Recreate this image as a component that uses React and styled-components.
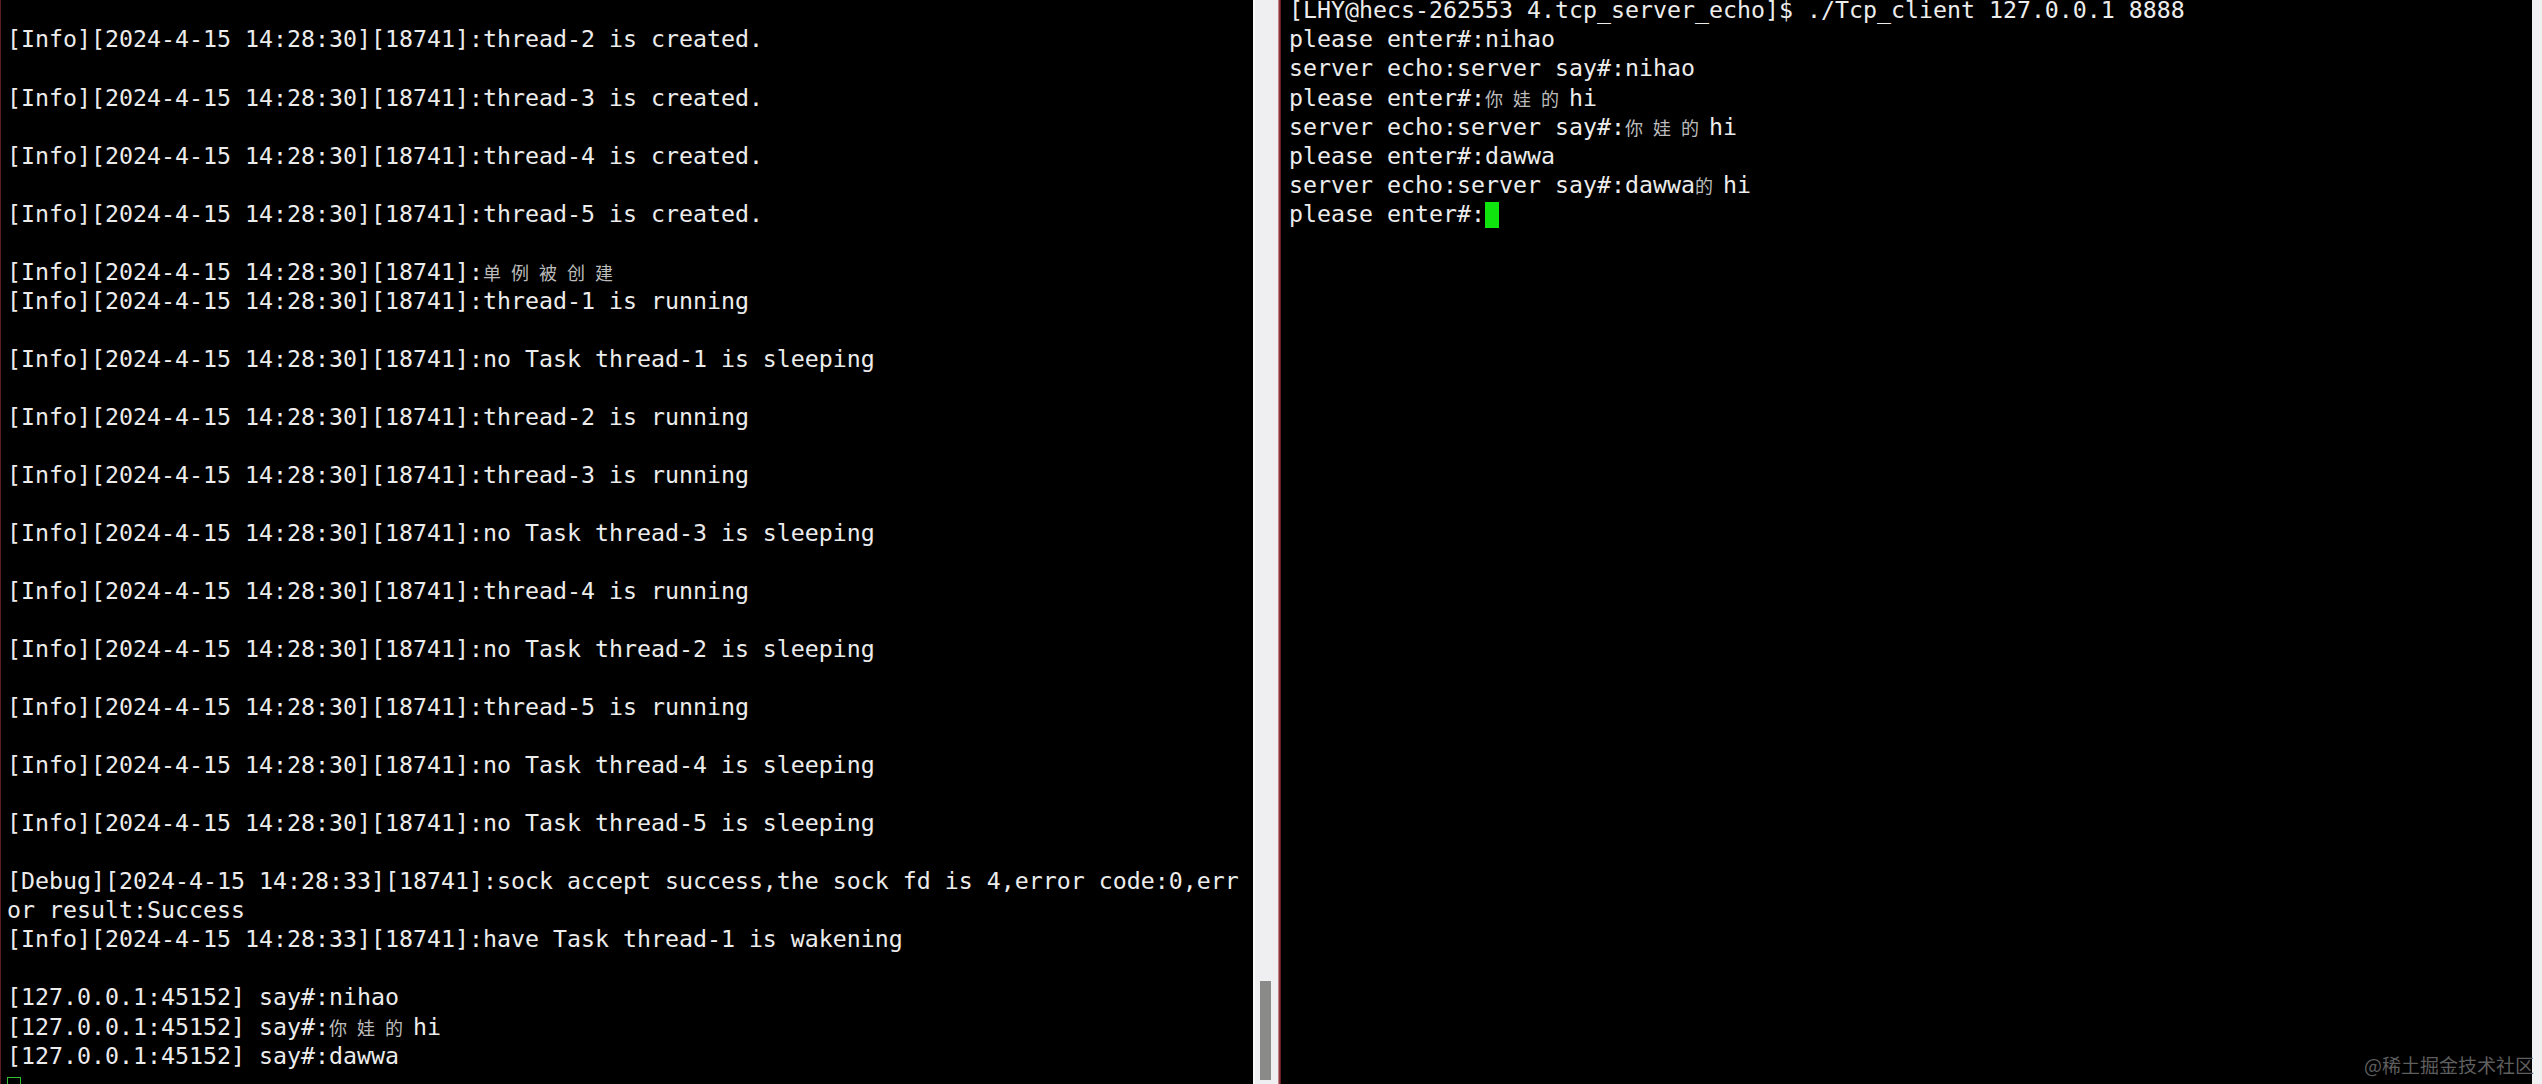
import React from 'react'
import styled, { createGlobalStyle, css } from 'styled-components'

//x//////////////////////////////////////////////////
// Data
//x//////////////////////////////////////////////////

const info = (t, msg) => `[Info][2024-4-15 14:28:${t}][18741]:${msg}`

const serverLines = [
  '',
  info(30, 'thread-2 is created.'),
  '',
  info(30, 'thread-3 is created.'),
  '',
  info(30, 'thread-4 is created.'),
  '',
  info(30, 'thread-5 is created.'),
  '',
  info(30, '单例被创建'),
  info(30, 'thread-1 is running'),
  '',
  info(30, 'no Task thread-1 is sleeping'),
  '',
  info(30, 'thread-2 is running'),
  '',
  info(30, 'thread-3 is running'),
  '',
  info(30, 'no Task thread-3 is sleeping'),
  '',
  info(30, 'thread-4 is running'),
  '',
  info(30, 'no Task thread-2 is sleeping'),
  '',
  info(30, 'thread-5 is running'),
  '',
  info(30, 'no Task thread-4 is sleeping'),
  '',
  info(30, 'no Task thread-5 is sleeping'),
  '',
  '[Debug][2024-4-15 14:28:33][18741]:sock accept success,the sock fd is 4,error code:0,err',
  'or result:Success',
  info(33, 'have Task thread-1 is wakening'),
  '',
  '[127.0.0.1:45152] say#:nihao',
  '[127.0.0.1:45152] say#:你娃的hi',
  '[127.0.0.1:45152] say#:dawwa',
]

const clientLines = [
  '[LHY@hecs-262553 4.tcp_server_echo]$ ./Tcp_client 127.0.0.1 8888',
  'please enter#:nihao',
  'server echo:server say#:nihao',
  'please enter#:你娃的hi',
  'server echo:server say#:你娃的hi',
  'please enter#:dawwa',
  'server echo:server say#:dawwa的hi',
]

const HAN = /[\u4e00-\u9fff]/

// split a line so each CJK glyph takes a double-width cell
const renderText = (text) => {
  const out = []
  let buf = ''
  ;[...text].forEach((ch, i) => {
    if (HAN.test(ch)) {
      if (buf) out.push(buf)
      buf = ''
      out.push(<SWide key={i}>{ch}</SWide>)
    } else {
      buf += ch
    }
  })
  if (buf) out.push(buf)
  return out
}

//x//////////////////////////////////////////////////
// App
//x//////////////////////////////////////////////////

export default function App() {
  return (
    <>
      <GlobalStyle />
      <SDesktop>
        <SPane $edge>
          <SScreen>
            {serverLines.map((l, i) => (
              <SLine key={i}>{renderText(l)}</SLine>
            ))}
            <SLine>
              <SCursor />
            </SLine>
          </SScreen>
        </SPane>

        <STrack>
          <SThumb />
        </STrack>

        <SDivider />

        <SPane $grow $pad={8}>
          <SScreen>
            {clientLines.map((l, i) => (
              <SLine key={i}>{renderText(l)}</SLine>
            ))}
            <SLine>
              please enter#:
              <SCursor $active />
            </SLine>
          </SScreen>
        </SPane>

        <SFrameEdge />

        <SWatermark>@稀土掘金技术社区</SWatermark>
      </SDesktop>
    </>
  )
}

//x//////////////////////////////////////////////////
// Styles
//x//////////////////////////////////////////////////

const GlobalStyle = createGlobalStyle`
  html, body {
    margin: 0;
    padding: 0;
    background: #000;
    overflow: hidden;
  }
`

const SDesktop = styled.div`
  position: relative;
  display: flex;
  width: 2542px;
  height: 1084px;
  background: #000;
  overflow: hidden;
`

const SPane = styled.section(
  ({ $edge, $grow, $pad = 6 }) => css`
    background: #000;
    overflow: hidden;
    padding-left: ${$pad}px;
    ${$edge &&
    css`
      flex: none;
      width: 1253px;
      border-left: 1px solid #5c1d22;
      box-sizing: border-box;
    `}
    ${$grow &&
    css`
      flex: 1;
    `}
  `
)

const SScreen = styled.div`
  margin-top: -4.6px;
  font-family: 'DejaVu Sans Mono', 'Liberation Mono', 'Noto Sans CJK SC', monospace;
  font-size: 23.25px;
  color: #ececec;
`

const SLine = styled.div`
  height: 29.04px;
  line-height: 29.04px;
  white-space: pre;
  display: flex;
  align-items: center;
`

const SWide = styled.span`
  display: inline-block;
  width: 28px;
  font-family: 'Noto Sans CJK SC', sans-serif;
  font-size: 18px;
  color: #bcbcbc;
  line-height: 29px;
  padding-top: 2px;
  box-sizing: border-box;
`

const SCursor = styled.span(
  ({ $active }) => css`
    display: inline-block;
    width: 14px;
    box-sizing: border-box;
    ${$active
      ? css`
          height: 26px;
          background: #0fe40f;
          margin-top: 3px;
        `
      : css`
          height: 29px;
          margin-top: 14px;
          border: 1px solid #2fbf2f;
        `}
  `
)

const STrack = styled.div`
  flex: none;
  width: 25px;
  background: #efeff1;
  border-left: 2px solid #f8f8f8;
  box-sizing: border-box;
  display: flex;
  flex-direction: column;
  justify-content: flex-end;
  padding: 0 0 4px 5px;
`

const SThumb = styled.div`
  width: 11px;
  height: 99px;
  background: #8a8b89;
`

const SDivider = styled.div`
  flex: none;
  width: 3px;
  background: linear-gradient(to right, #d9a3a6, #7a2228 60%, #5a1a1e);
`

const SFrameEdge = styled.div`
  flex: none;
  width: 10px;
  background: #f1f1f3;
`

const SWatermark = styled.span`
  position: absolute;
  right: 8px;
  bottom: 6px;
  font-family: 'Noto Sans CJK SC', sans-serif;
  font-size: 19px;
  color: #5e5e5e;
`
